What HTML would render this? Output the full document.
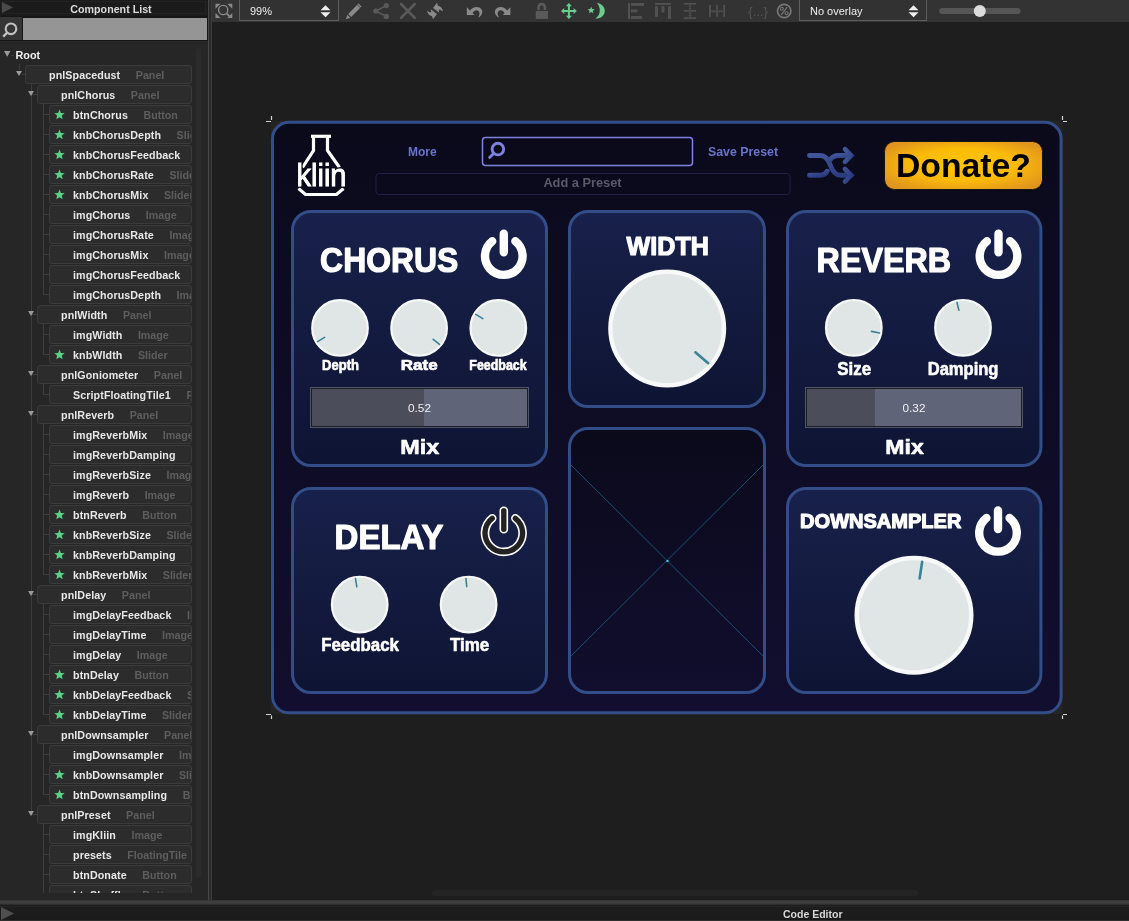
<!DOCTYPE html>
<html><head><meta charset="utf-8">
<style>
*{margin:0;padding:0;box-sizing:border-box}
html,body{width:1129px;height:921px;overflow:hidden;background:#1e1e1e;font-family:"Liberation Sans",sans-serif}
body>*{will-change:transform}
.a{position:absolute}
#side{position:absolute;left:0;top:0;width:208px;height:900px;background:#262626;overflow:hidden}
#sidehdr{position:absolute;left:0;top:0;width:208px;height:16px;background:#1b1b1b}
#sidehdr .in{position:absolute;left:1px;top:1px;width:205px;height:13px;border:1px solid #232323}
#sidehdr .t{position:absolute;left:0;top:2px;width:222px;text-align:center;color:#dcdcdc;font-size:10.7px;font-weight:bold;line-height:14px}
#search{position:absolute;left:0;top:16px;width:208px;height:25px;background:#161616}
#searchicon{position:absolute;left:0;top:1px;width:22px;height:23px;background:#353535}
#searchfield{position:absolute;left:23px;top:2px;width:184px;height:22px;background:#959595}
.row{position:absolute;height:19px;background:#2c2c2c;border:1px solid #3b3b3b;border-radius:3px;font-size:10.7px;line-height:19px;white-space:nowrap;overflow:hidden;padding-left:23px}
.row .nm{color:#e8e8e8;font-weight:bold;letter-spacing:0.1px}
.row .ty{color:#5e5e5e;font-weight:bold;margin-left:15.5px}
.star{position:absolute;left:4px;top:3px}
.tri{position:absolute;width:0;height:0;border-left:3.3px solid transparent;border-right:3.3px solid transparent;border-top:5.7px solid #9a9a9a}
.vl{position:absolute;width:1px;background:#3d3d3d}
.hl{position:absolute;height:1px;background:#3d3d3d}
#divider{position:absolute;left:208px;top:0;width:4px;height:900px;background:#2c2c2c;border-left:1px solid #474747;border-right:1px solid #3c3c3c}
#toolbar{position:absolute;left:212px;top:0;width:917px;height:22px;background:#333}
.combo{position:absolute;top:-1px;height:22px;border:1px solid #5e5e5e;background:#323232;color:#eee;font-size:11.5px;line-height:19px}
#bottom{position:absolute;left:0;top:900px;width:1129px;height:21px;background:linear-gradient(#1f1f1f,#1a1a1a)}
#bottom .band{position:absolute;left:0;top:0;width:1129px;height:5px;background:linear-gradient(#333,#404040 40%,#3a3a3a 70%,#262626)}
#bottom .l1{position:absolute;left:0;top:6px;width:1129px;height:1px;background:#252525}
#bottom .l2{position:absolute;left:0;top:20px;width:1129px;height:1px;background:#2e2e2e}
#bottom .t{position:absolute;left:783px;top:8px;color:#d8d8d8;font-size:10.5px;font-weight:bold}
/* plugin */
#plug{position:absolute;left:271px;top:121px;width:792px;height:594px;background:#232323}
#plugbody{position:absolute;left:0;top:0;width:792px;height:594px;border:3px solid #34569a;border-radius:18px;background:linear-gradient(#0b0a1c,#120e30)}
.pnl{position:absolute;border:3px solid #34569a;border-radius:18px;background:linear-gradient(#18214b,#0e1433)}
.ttl{position:absolute;color:#fff;font-weight:bold;white-space:nowrap;transform-origin:0 0}
.lbl{position:absolute;color:#fff;font-weight:bold;white-space:nowrap;text-align:center}
.knob{position:absolute;border-radius:50%;background:#dfe5e5;box-shadow:inset 0 0 0 2px #f3f3f3}
.sl{position:absolute;border:1px solid #27283a;background:#5d6178}
.sl .f{position:absolute;left:0;top:0;bottom:0;background:#4a4b55}
.sl .v{position:absolute;left:0;right:0;top:0;bottom:0;text-align:center;color:#e8e8e8;font-size:12px;line-height:38px}
</style></head><body>

<div id="side">
  <div id="sidehdr"><div class="in"></div>
    <svg class="a" style="left:2px;top:2px" width="12" height="12" viewBox="0 0 12 12"><path d="M0 0L11 5.5L0 11z" fill="#4a4a4a"/></svg>
    <div class="t">Component List</div></div>
  <div id="search"><div id="searchicon">
    <svg class="a" style="left:0;top:0" width="22" height="23" viewBox="0 0 22 23"><circle cx="11" cy="11.8" r="5.3" fill="none" stroke="#c2c2c2" stroke-width="2.1"/><path d="M7.2 15.6L3.2 19.6" stroke="#c2c2c2" stroke-width="2.3"/></svg>
  </div><div id="searchfield"></div></div>
  <div class="a" style="left:196px;top:48px;width:5px;height:830px;background:#2b2b2b;border-radius:3px"></div>
  <svg class="a" style="left:3.8px;top:50.8px" width="8" height="7" viewBox="0 0 8 7"><path d="M0 0H6.4L3.2 5.8z" fill="#9a9a9a"/></svg>
  <div class="a" style="left:11px;top:54.5px;width:3px;height:1px;background:#3a3a3a"></div>
  <div class="a" style="left:15.5px;top:48px;color:#f0f0f0;font-size:10.8px;font-weight:bold;line-height:14px">Root</div>
  <div class="a" style="left:19px;top:64px;width:1px;height:6px;background:#3a3a3a"></div>
<div id="treeabs" style="position:absolute;left:0;top:0;width:208px;height:893px;overflow:hidden">
<div class="vl" style="left:31.0px;top:83px;height:731px"></div>
<div class="hl" style="left:32.0px;top:93.5px;width:3px"></div>
<div class="hl" style="left:32.0px;top:313.5px;width:3px"></div>
<div class="hl" style="left:32.0px;top:373.5px;width:3px"></div>
<div class="hl" style="left:32.0px;top:413.5px;width:3px"></div>
<div class="hl" style="left:32.0px;top:593.5px;width:3px"></div>
<div class="hl" style="left:32.0px;top:733.5px;width:3px"></div>
<div class="hl" style="left:32.0px;top:813.5px;width:3px"></div>
<div class="vl" style="left:43.0px;top:103px;height:191px"></div>
<div class="hl" style="left:43.0px;top:113.5px;width:6px"></div>
<div class="hl" style="left:43.0px;top:133.5px;width:6px"></div>
<div class="hl" style="left:43.0px;top:153.5px;width:6px"></div>
<div class="hl" style="left:43.0px;top:173.5px;width:6px"></div>
<div class="hl" style="left:43.0px;top:193.5px;width:6px"></div>
<div class="hl" style="left:43.0px;top:213.5px;width:6px"></div>
<div class="hl" style="left:43.0px;top:233.5px;width:6px"></div>
<div class="hl" style="left:43.0px;top:253.5px;width:6px"></div>
<div class="hl" style="left:43.0px;top:273.5px;width:6px"></div>
<div class="hl" style="left:43.0px;top:293.5px;width:6px"></div>
<div class="vl" style="left:43.0px;top:323px;height:31px"></div>
<div class="hl" style="left:43.0px;top:333.5px;width:6px"></div>
<div class="hl" style="left:43.0px;top:353.5px;width:6px"></div>
<div class="vl" style="left:43.0px;top:383px;height:11px"></div>
<div class="hl" style="left:43.0px;top:393.5px;width:6px"></div>
<div class="vl" style="left:43.0px;top:423px;height:151px"></div>
<div class="hl" style="left:43.0px;top:433.5px;width:6px"></div>
<div class="hl" style="left:43.0px;top:453.5px;width:6px"></div>
<div class="hl" style="left:43.0px;top:473.5px;width:6px"></div>
<div class="hl" style="left:43.0px;top:493.5px;width:6px"></div>
<div class="hl" style="left:43.0px;top:513.5px;width:6px"></div>
<div class="hl" style="left:43.0px;top:533.5px;width:6px"></div>
<div class="hl" style="left:43.0px;top:553.5px;width:6px"></div>
<div class="hl" style="left:43.0px;top:573.5px;width:6px"></div>
<div class="vl" style="left:43.0px;top:603px;height:111px"></div>
<div class="hl" style="left:43.0px;top:613.5px;width:6px"></div>
<div class="hl" style="left:43.0px;top:633.5px;width:6px"></div>
<div class="hl" style="left:43.0px;top:653.5px;width:6px"></div>
<div class="hl" style="left:43.0px;top:673.5px;width:6px"></div>
<div class="hl" style="left:43.0px;top:693.5px;width:6px"></div>
<div class="hl" style="left:43.0px;top:713.5px;width:6px"></div>
<div class="vl" style="left:43.0px;top:743px;height:51px"></div>
<div class="hl" style="left:43.0px;top:753.5px;width:6px"></div>
<div class="hl" style="left:43.0px;top:773.5px;width:6px"></div>
<div class="hl" style="left:43.0px;top:793.5px;width:6px"></div>
<div class="vl" style="left:43.0px;top:823px;height:71px"></div>
<div class="hl" style="left:43.0px;top:833.5px;width:6px"></div>
<div class="hl" style="left:43.0px;top:853.5px;width:6px"></div>
<div class="hl" style="left:43.0px;top:873.5px;width:6px"></div>
<div class="hl" style="left:43.0px;top:893.5px;width:6px"></div>
<div class="row" style="left:25px;top:64.5px;width:166.5px"><span class="nm">pnlSpacedust</span><span class="ty">Panel</span></div><div class="tri" style="left:16px;top:71px"></div><div class="hl" style="left:22px;top:73.5px;width:4px"></div>
<div class="row" style="left:37px;top:84.5px;width:154.5px"><span class="nm">pnlChorus</span><span class="ty">Panel</span></div><div class="tri" style="left:28px;top:91px"></div><div class="hl" style="left:34px;top:93.5px;width:4px"></div>
<div class="row" style="left:49px;top:104.5px;width:142.5px"><span class="nm">btnChorus</span><span class="ty">Button</span><svg class="star" width="11" height="11" viewBox="0 0 20 20"><path d="M10 0.8l2.6 6.3 6.8.5-5.2 4.4 1.6 6.6L10 15l-5.8 3.6 1.6-6.6L.6 7.6l6.8-.5z" fill="#5ecf85"/></svg></div>
<div class="row" style="left:49px;top:124.5px;width:142.5px"><span class="nm">knbChorusDepth</span><span class="ty">Slider</span><svg class="star" width="11" height="11" viewBox="0 0 20 20"><path d="M10 0.8l2.6 6.3 6.8.5-5.2 4.4 1.6 6.6L10 15l-5.8 3.6 1.6-6.6L.6 7.6l6.8-.5z" fill="#5ecf85"/></svg></div>
<div class="row" style="left:49px;top:144.5px;width:142.5px"><span class="nm">knbChorusFeedback</span><span class="ty">Slider</span><svg class="star" width="11" height="11" viewBox="0 0 20 20"><path d="M10 0.8l2.6 6.3 6.8.5-5.2 4.4 1.6 6.6L10 15l-5.8 3.6 1.6-6.6L.6 7.6l6.8-.5z" fill="#5ecf85"/></svg></div>
<div class="row" style="left:49px;top:164.5px;width:142.5px"><span class="nm">knbChorusRate</span><span class="ty">Slider</span><svg class="star" width="11" height="11" viewBox="0 0 20 20"><path d="M10 0.8l2.6 6.3 6.8.5-5.2 4.4 1.6 6.6L10 15l-5.8 3.6 1.6-6.6L.6 7.6l6.8-.5z" fill="#5ecf85"/></svg></div>
<div class="row" style="left:49px;top:184.5px;width:142.5px"><span class="nm">knbChorusMix</span><span class="ty">Slider</span><svg class="star" width="11" height="11" viewBox="0 0 20 20"><path d="M10 0.8l2.6 6.3 6.8.5-5.2 4.4 1.6 6.6L10 15l-5.8 3.6 1.6-6.6L.6 7.6l6.8-.5z" fill="#5ecf85"/></svg></div>
<div class="row" style="left:49px;top:204.5px;width:142.5px"><span class="nm">imgChorus</span><span class="ty">Image</span></div>
<div class="row" style="left:49px;top:224.5px;width:142.5px"><span class="nm">imgChorusRate</span><span class="ty">Image</span></div>
<div class="row" style="left:49px;top:244.5px;width:142.5px"><span class="nm">imgChorusMix</span><span class="ty">Image</span></div>
<div class="row" style="left:49px;top:264.5px;width:142.5px"><span class="nm">imgChorusFeedback</span><span class="ty">Image</span></div>
<div class="row" style="left:49px;top:284.5px;width:142.5px"><span class="nm">imgChorusDepth</span><span class="ty">Image</span></div>
<div class="row" style="left:37px;top:304.5px;width:154.5px"><span class="nm">pnlWidth</span><span class="ty">Panel</span></div><div class="tri" style="left:28px;top:311px"></div><div class="hl" style="left:34px;top:313.5px;width:4px"></div>
<div class="row" style="left:49px;top:324.5px;width:142.5px"><span class="nm">imgWidth</span><span class="ty">Image</span></div>
<div class="row" style="left:49px;top:344.5px;width:142.5px"><span class="nm">knbWIdth</span><span class="ty">Slider</span><svg class="star" width="11" height="11" viewBox="0 0 20 20"><path d="M10 0.8l2.6 6.3 6.8.5-5.2 4.4 1.6 6.6L10 15l-5.8 3.6 1.6-6.6L.6 7.6l6.8-.5z" fill="#5ecf85"/></svg></div>
<div class="row" style="left:37px;top:364.5px;width:154.5px"><span class="nm">pnlGoniometer</span><span class="ty">Panel</span></div><div class="tri" style="left:28px;top:371px"></div><div class="hl" style="left:34px;top:373.5px;width:4px"></div>
<div class="row" style="left:49px;top:384.5px;width:142.5px"><span class="nm">ScriptFloatingTile1</span><span class="ty">FloatingTile</span></div>
<div class="row" style="left:37px;top:404.5px;width:154.5px"><span class="nm">pnlReverb</span><span class="ty">Panel</span></div><div class="tri" style="left:28px;top:411px"></div><div class="hl" style="left:34px;top:413.5px;width:4px"></div>
<div class="row" style="left:49px;top:424.5px;width:142.5px"><span class="nm">imgReverbMix</span><span class="ty">Image</span></div>
<div class="row" style="left:49px;top:444.5px;width:142.5px"><span class="nm">imgReverbDamping</span><span class="ty">Image</span></div>
<div class="row" style="left:49px;top:464.5px;width:142.5px"><span class="nm">imgReverbSize</span><span class="ty">Image</span></div>
<div class="row" style="left:49px;top:484.5px;width:142.5px"><span class="nm">imgReverb</span><span class="ty">Image</span></div>
<div class="row" style="left:49px;top:504.5px;width:142.5px"><span class="nm">btnReverb</span><span class="ty">Button</span><svg class="star" width="11" height="11" viewBox="0 0 20 20"><path d="M10 0.8l2.6 6.3 6.8.5-5.2 4.4 1.6 6.6L10 15l-5.8 3.6 1.6-6.6L.6 7.6l6.8-.5z" fill="#5ecf85"/></svg></div>
<div class="row" style="left:49px;top:524.5px;width:142.5px"><span class="nm">knbReverbSize</span><span class="ty">Slider</span><svg class="star" width="11" height="11" viewBox="0 0 20 20"><path d="M10 0.8l2.6 6.3 6.8.5-5.2 4.4 1.6 6.6L10 15l-5.8 3.6 1.6-6.6L.6 7.6l6.8-.5z" fill="#5ecf85"/></svg></div>
<div class="row" style="left:49px;top:544.5px;width:142.5px"><span class="nm">knbReverbDamping</span><span class="ty">Slider</span><svg class="star" width="11" height="11" viewBox="0 0 20 20"><path d="M10 0.8l2.6 6.3 6.8.5-5.2 4.4 1.6 6.6L10 15l-5.8 3.6 1.6-6.6L.6 7.6l6.8-.5z" fill="#5ecf85"/></svg></div>
<div class="row" style="left:49px;top:564.5px;width:142.5px"><span class="nm">knbReverbMix</span><span class="ty">Slider</span><svg class="star" width="11" height="11" viewBox="0 0 20 20"><path d="M10 0.8l2.6 6.3 6.8.5-5.2 4.4 1.6 6.6L10 15l-5.8 3.6 1.6-6.6L.6 7.6l6.8-.5z" fill="#5ecf85"/></svg></div>
<div class="row" style="left:37px;top:584.5px;width:154.5px"><span class="nm">pnlDelay</span><span class="ty">Panel</span></div><div class="tri" style="left:28px;top:591px"></div><div class="hl" style="left:34px;top:593.5px;width:4px"></div>
<div class="row" style="left:49px;top:604.5px;width:142.5px"><span class="nm">imgDelayFeedback</span><span class="ty">Image</span></div>
<div class="row" style="left:49px;top:624.5px;width:142.5px"><span class="nm">imgDelayTime</span><span class="ty">Image</span></div>
<div class="row" style="left:49px;top:644.5px;width:142.5px"><span class="nm">imgDelay</span><span class="ty">Image</span></div>
<div class="row" style="left:49px;top:664.5px;width:142.5px"><span class="nm">btnDelay</span><span class="ty">Button</span><svg class="star" width="11" height="11" viewBox="0 0 20 20"><path d="M10 0.8l2.6 6.3 6.8.5-5.2 4.4 1.6 6.6L10 15l-5.8 3.6 1.6-6.6L.6 7.6l6.8-.5z" fill="#5ecf85"/></svg></div>
<div class="row" style="left:49px;top:684.5px;width:142.5px"><span class="nm">knbDelayFeedback</span><span class="ty">Slider</span><svg class="star" width="11" height="11" viewBox="0 0 20 20"><path d="M10 0.8l2.6 6.3 6.8.5-5.2 4.4 1.6 6.6L10 15l-5.8 3.6 1.6-6.6L.6 7.6l6.8-.5z" fill="#5ecf85"/></svg></div>
<div class="row" style="left:49px;top:704.5px;width:142.5px"><span class="nm">knbDelayTime</span><span class="ty">Slider</span><svg class="star" width="11" height="11" viewBox="0 0 20 20"><path d="M10 0.8l2.6 6.3 6.8.5-5.2 4.4 1.6 6.6L10 15l-5.8 3.6 1.6-6.6L.6 7.6l6.8-.5z" fill="#5ecf85"/></svg></div>
<div class="row" style="left:37px;top:724.5px;width:154.5px"><span class="nm">pnlDownsampler</span><span class="ty">Panel</span></div><div class="tri" style="left:28px;top:731px"></div><div class="hl" style="left:34px;top:733.5px;width:4px"></div>
<div class="row" style="left:49px;top:744.5px;width:142.5px"><span class="nm">imgDownsampler</span><span class="ty">Image</span></div>
<div class="row" style="left:49px;top:764.5px;width:142.5px"><span class="nm">knbDownsampler</span><span class="ty">Slider</span><svg class="star" width="11" height="11" viewBox="0 0 20 20"><path d="M10 0.8l2.6 6.3 6.8.5-5.2 4.4 1.6 6.6L10 15l-5.8 3.6 1.6-6.6L.6 7.6l6.8-.5z" fill="#5ecf85"/></svg></div>
<div class="row" style="left:49px;top:784.5px;width:142.5px"><span class="nm">btnDownsampling</span><span class="ty">Button</span><svg class="star" width="11" height="11" viewBox="0 0 20 20"><path d="M10 0.8l2.6 6.3 6.8.5-5.2 4.4 1.6 6.6L10 15l-5.8 3.6 1.6-6.6L.6 7.6l6.8-.5z" fill="#5ecf85"/></svg></div>
<div class="row" style="left:37px;top:804.5px;width:154.5px"><span class="nm">pnlPreset</span><span class="ty">Panel</span></div><div class="tri" style="left:28px;top:811px"></div><div class="hl" style="left:34px;top:813.5px;width:4px"></div>
<div class="row" style="left:49px;top:824.5px;width:142.5px"><span class="nm">imgKliin</span><span class="ty">Image</span></div>
<div class="row" style="left:49px;top:844.5px;width:142.5px"><span class="nm">presets</span><span class="ty">FloatingTile</span></div>
<div class="row" style="left:49px;top:864.5px;width:142.5px"><span class="nm">btnDonate</span><span class="ty">Button</span></div>
<div class="row" style="left:49px;top:884.5px;width:142.5px"><span class="nm">btnShuffle</span><span class="ty">Button</span></div>
</div>
</div>
<div id="divider"></div>
<div id="toolbar">
<svg class="a" style="left:-212px;top:0" width="1129" height="22" viewBox="0 0 1129 22">
 <!-- zoom fit -->
 <g fill="#8a8a8a">
  <path d="M215.5 3.7h5l-5 5z M232.3 3.7h-5l5 5z M215.5 18h5l-5-5z M232.3 18h-5l5-5z"/>
 </g>
 <circle cx="223.2" cy="10" r="4.6" fill="none" stroke="#8a8a8a" stroke-width="1.4"/>
 <path d="M226.6 13.4l2.8 2.8" stroke="#8a8a8a" stroke-width="1.8"/>
 <!-- pencil -->
 <path d="M345.8 19.3l1.6-4.6 3 3z" fill="#8a8a8a"/>
 <path d="M348.2 13.9l10.3-10.3 3 3-10.3 10.3z" fill="#8a8a8a"/>
 <path d="M357.4 4.8l3 3" stroke="#333" stroke-width="0.8"/>
 <!-- share -->
 <g fill="#5a5a5a">
  <circle cx="375.8" cy="11" r="2.6"/><circle cx="386.3" cy="5.6" r="2.6"/><circle cx="386.3" cy="16.4" r="2.6"/>
 </g>
 <path d="M375.8 11L386.3 5.6M375.8 11L386.3 16.4" stroke="#5a5a5a" stroke-width="1.5"/>
 <!-- x -->
 <path d="M401 4L414.8 17.8M414.8 4L401 17.8" stroke="#5a5a5a" stroke-width="2.5" stroke-linecap="round"/>
 <!-- sync -->
 <g fill="#8a8a8a">
  <path transform="translate(0.7,-0.5)" d="M432.3 8.6L436.3 3.2L437.3 6.3C440.2 6.8 442 9.2 442.2 12C440.8 10.6 439.4 10.1 438 10.2L438.6 13.3z"/>
  <path transform="translate(-0.7,0.5)" d="M437.7 13.4L433.7 18.8L432.7 15.7C429.8 15.2 428 12.8 427.8 10C429.2 11.4 430.6 11.9 432 11.8L431.4 8.7z"/>
 </g>
 <!-- undo -->
 <g id="undo" fill="#8a8a8a">
  <path d="M466.8 7.3V15H474.5z"/>
  <path d="M469.6 11.2C472.6 6.6 478.6 5.8 481.4 9.2C483.4 11.9 482 15.6 478 17.8C479.8 15.2 480 12.6 478.8 11.2C477 9.4 474.2 9.9 472.4 13.2z"/>
 </g>
 <!-- redo -->
 <g transform="translate(977.2,0) scale(-1,1)" fill="#8a8a8a">
  <path d="M466.8 7.3V15H474.5z"/>
  <path d="M469.6 11.2C472.6 6.6 478.6 5.8 481.4 9.2C483.4 11.9 482 15.6 478 17.8C479.8 15.2 480 12.6 478.8 11.2C477 9.4 474.2 9.9 472.4 13.2z"/>
 </g>
 <!-- lock -->
 <path d="M538.5 10V7.3a3.2 3.2 0 0 1 6.4 0V10" fill="none" stroke="#5a5a5a" stroke-width="2.6"/>
 <rect x="535.8" y="10.9" width="12.2" height="8" fill="#5a5a5a"/>
 <!-- move -->
 <g fill="#6ccb8e">
  <path d="M568.9 3.1l-3 3.2h2v9.4h-2l3 3.2 3-3.2h-2v-9.4h2z"/>
  <path d="M561 11.1l3.2-3v2h9.4v-2l3.2 3-3.2 3v-2h-9.4v2z"/>
 </g>
 <!-- moon -->
 <path d="M596.8 2.8C601.6 3.6 604.8 7 604.8 11C604.8 15.3 601 18.7 595.3 18.7C598.4 16.5 599.8 13.7 599.8 10.6C599.8 7.6 598.7 4.9 596.8 2.8z" fill="#6ccb8e"/>
 <path d="M591.2 6.8l1 2.3 2.5 0.2-1.9 1.6 0.6 2.4-2.2-1.3-2.2 1.3 0.6-2.4-1.9-1.6 2.5-0.2z" fill="#6ccb8e"/>
 <!-- align left -->
 <g fill="#515151">
  <rect x="628" y="3" width="2" height="15.9"/>
  <rect x="631" y="3" width="13" height="2.9"/>
  <rect x="631" y="9.4" width="6.5" height="3"/>
  <rect x="631" y="16" width="11" height="2.9"/>
 </g>
 <!-- align top -->
 <g fill="#515151">
  <rect x="655" y="3" width="16" height="1.8"/>
  <rect x="655" y="6.2" width="3" height="10.6"/>
  <rect x="661.5" y="6.2" width="3" height="6.3"/>
  <rect x="668" y="6.2" width="3" height="12.7"/>
 </g>
 <!-- distribute vertical -->
 <g fill="#515151">
  <rect x="683.8" y="3" width="12.2" height="1.6"/>
  <rect x="683.8" y="10.1" width="12.2" height="1.6"/>
  <rect x="683.8" y="17.2" width="12.2" height="1.7"/>
  <rect x="689.5" y="5" width="1" height="4.6"/><rect x="689.5" y="12.2" width="1" height="4.6"/>
  <path d="M688.3 6.5h3.4l-1.7-1.5z M688.3 8.2h3.4l-1.7 1.5z M688.3 13.6h3.4l-1.7-1.5z M688.3 15.3h3.4l-1.7 1.5z"/>
 </g>
 <!-- distribute horizontal -->
 <g fill="#515151">
  <rect x="709" y="4.8" width="1.9" height="12"/>
  <rect x="716.2" y="4.8" width="1.6" height="12"/>
  <rect x="723.3" y="4.8" width="1.7" height="12"/>
  <rect x="711.2" y="10.7" width="4.6" height="1"/><rect x="718.2" y="10.7" width="4.6" height="1"/>
  <path d="M712.6 9.5v3.4l-1.5-1.7z M714.3 9.5v3.4l1.5-1.7z M719.6 9.5v3.4l-1.5-1.7z M721.3 9.5v3.4l1.5-1.7z"/>
 </g>
 <!-- {...} -->
 <text x="748.3" y="15.6" font-family="Liberation Sans" font-size="13" fill="#555">{...}</text>
 <!-- % -->
 <circle cx="784.2" cy="11" r="6.7" fill="none" stroke="#777" stroke-width="1.7"/>
 <circle cx="781.8" cy="8.7" r="1.5" fill="none" stroke="#777" stroke-width="1.1"/><circle cx="786.6" cy="13.3" r="1.5" fill="none" stroke="#777" stroke-width="1.1"/><path d="M787.2 7.2L781.2 14.8" stroke="#777" stroke-width="1.2"/>
 <!-- slider -->
 <rect x="939.2" y="8.1" width="81.4" height="6" rx="3" fill="#555"/>
 <circle cx="979.8" cy="11.1" r="6" fill="#dcdcdc"/>
</svg>
<div class="combo" style="left:27px;width:100px"><span style="position:absolute;left:10px;top:2px;font-size:11px">99%</span>
 <svg class="a" style="left:80px;top:5px" width="12" height="13" viewBox="0 0 12 13"><path d="M0.5 5.2L5.5 0.3L10.5 5.2z M0.5 7.3L5.5 12.2L10.5 7.3z" fill="#eee"/></svg></div>
<div class="combo" style="left:587px;width:128px"><span style="position:absolute;left:10px;top:2px;font-size:11px">No overlay</span>
 <svg class="a" style="left:108px;top:5px" width="12" height="13" viewBox="0 0 12 13"><path d="M0.5 5.2L5.5 0.3L10.5 5.2z M0.5 7.3L5.5 12.2L10.5 7.3z" fill="#eee"/></svg></div>

</div>
<div id="bottom"><div class="band"></div><div class="l1"></div><div class="l2"></div>
  <svg class="a" style="left:1px;top:7px" width="14" height="13" viewBox="0 0 14 13"><path d="M0 0L13 6.5L0 13z" fill="#4e4e4e"/></svg>
  <div class="t">Code Editor</div></div>
<!-- canvas h-scrollbar -->
<div class="a" style="left:432px;top:890px;width:486px;height:6px;background:#242424;border-radius:3px"></div>

<svg class="a" style="left:0;top:0" width="1129" height="921" viewBox="0 0 1129 921">
<defs>
<linearGradient id="gBody" x1="0" y1="0" x2="0" y2="1"><stop offset="0" stop-color="#0b0a1b"/><stop offset="1" stop-color="#120e2f"/></linearGradient>
<linearGradient id="gPnl" x1="0" y1="0" x2="0" y2="1"><stop offset="0" stop-color="#18214b"/><stop offset="1" stop-color="#0e1433"/></linearGradient>
<linearGradient id="gGon" x1="0" y1="0" x2="0" y2="1"><stop offset="0" stop-color="#0b0a1b"/><stop offset="1" stop-color="#110e2e"/></linearGradient>
<radialGradient id="gDon" cx="0.5" cy="0.5" r="0.6" fx="0.5" fy="0.45"><stop offset="0" stop-color="#ffc503"/><stop offset="0.55" stop-color="#fbbb08"/><stop offset="1" stop-color="#e0951e"/></radialGradient>
<linearGradient id="gShuf" x1="0" y1="0" x2="1" y2="1"><stop offset="0" stop-color="#43579d"/><stop offset="1" stop-color="#283a7c"/></linearGradient>
</defs>
<rect x="271" y="120.8" width="791.6" height="593.5" fill="#242424"/>
<rect x="272.5" y="122.3" width="788.6" height="590.5" rx="16.5" fill="url(#gBody)" stroke="#324d87" stroke-width="3"/>
<path d="M266 121.5H271M271.5 116V120M1062.5 116V120M1063 121.5H1067M266 714.5H271M271.5 715.5V719M1063 714.5H1067M1062.5 715.5V719" stroke="#d4d4d4" stroke-width="1.2"/>
<g fill="none" stroke="#fff" stroke-width="3.2" stroke-linejoin="miter">
<path d="M311 136.3H331"/>
<path d="M313.5 137V150.5L302.5 167.5M327.5 137V150.5L339.5 167.5"/>
<path d="M298.5 188.5L305.5 194.5H336.5L343.5 188.5"/>
</g>
<text x="296.5" y="185.5" font-family="Liberation Sans" font-size="30.5" fill="#fff" stroke="#0b0a1b" stroke-width="3.5" paint-order="stroke" textLength="50" lengthAdjust="spacingAndGlyphs">kliin</text>
<text x="296.5" y="185.5" font-family="Liberation Sans" font-size="30.5" fill="#fff" stroke="#fff" stroke-width="0.8" textLength="50" lengthAdjust="spacingAndGlyphs">kliin</text>
<text x="408" y="155.8" font-family="Liberation Sans" font-weight="bold" font-size="13.5" fill="#6a74c8" textLength="28.7" lengthAdjust="spacingAndGlyphs">More</text>
<text x="708" y="155.8" font-family="Liberation Sans" font-weight="bold" font-size="13.5" fill="#6a74c8" textLength="70" lengthAdjust="spacingAndGlyphs">Save Preset</text>
<rect x="482.5" y="137.5" width="210" height="28" rx="3" fill="#0b0a1b" stroke="#7d82e0" stroke-width="1.5"/>
<circle cx="497.9" cy="149.1" r="5.8" fill="none" stroke="#7d82e0" stroke-width="2.9"/><path d="M493.6 153.6L489.6 157.6" stroke="#7d82e0" stroke-width="2.8" stroke-linecap="round"/>
<rect x="376" y="173.5" width="414" height="21" rx="3" fill="#0b0a1c" stroke="#1e1e46" stroke-width="1"/>
<text x="582.5" y="187" text-anchor="middle" font-family="Liberation Sans" font-weight="bold" font-size="12.8" fill="#5a5a6a">Add a Preset</text>
<g fill="none" stroke="url(#gShuf)" stroke-width="4.9" stroke-linecap="round">
<path d="M809.5 155.5H820.5C826 155.5 828.5 160 830.5 165.5C832.5 171 835 175.3 840.5 175.3H849"/>
<path d="M809.5 175.3H820.5C824 175.3 826 173.5 827.2 171.2"/>
<path d="M829.8 160.2C831.8 157.3 834.2 155.5 838.5 155.5H849"/>
</g>
<g fill="none" stroke="url(#gShuf)" stroke-width="4.6" stroke-linecap="round" stroke-linejoin="miter">
<path d="M845 149.2L851.3 155.5L845 161.8M845 169L851.3 175.3L845 181.6"/>
</g>
<rect x="884.5" y="141.5" width="158" height="48" rx="10" fill="url(#gDon)" stroke="#151515" stroke-width="1"/>
<text x="896" y="177" font-family="Liberation Sans" font-weight="bold" font-size="33.8" fill="#000" textLength="135" lengthAdjust="spacingAndGlyphs">Donate?</text>
<rect x="292.5" y="211.5" width="254" height="254" rx="18.5" fill="url(#gPnl)" stroke="#324d87" stroke-width="3"/>
<rect x="569.5" y="211.5" width="195" height="195" rx="18.5" fill="url(#gPnl)" stroke="#324d87" stroke-width="3"/>
<rect x="787.5" y="211.5" width="253.4000000000001" height="254" rx="18.5" fill="url(#gPnl)" stroke="#324d87" stroke-width="3"/>
<rect x="292.5" y="488.5" width="254" height="204" rx="18.5" fill="url(#gPnl)" stroke="#324d87" stroke-width="3"/>
<rect x="569.5" y="428.5" width="195" height="264" rx="18.5" fill="url(#gGon)" stroke="#324d87" stroke-width="3"/>
<rect x="787.5" y="488.5" width="253.4000000000001" height="204" rx="18.5" fill="url(#gPnl)" stroke="#324d87" stroke-width="3"/>
<text x="320.1" y="272.0" font-family="Liberation Sans" font-weight="bold" font-size="35.90" fill="#fff" stroke="#fff" stroke-width="1.2" stroke-linejoin="round" textLength="138.29999999999995" lengthAdjust="spacingAndGlyphs">CHORUS</text>
<text x="626.6" y="254.6" font-family="Liberation Sans" font-weight="bold" font-size="25.44" fill="#fff" stroke="#fff" stroke-width="1.2" stroke-linejoin="round" textLength="82.29999999999995" lengthAdjust="spacingAndGlyphs">WIDTH</text>
<text x="816.6" y="272.0" font-family="Liberation Sans" font-weight="bold" font-size="34.59" fill="#fff" stroke="#fff" stroke-width="1.2" stroke-linejoin="round" textLength="134.5999999999999" lengthAdjust="spacingAndGlyphs">REVERB</text>
<text x="334.6" y="548.8" font-family="Liberation Sans" font-weight="bold" font-size="34.88" fill="#fff" stroke="#fff" stroke-width="1.2" stroke-linejoin="round" textLength="108.79999999999995" lengthAdjust="spacingAndGlyphs">DELAY</text>
<text x="800.1" y="527.6" font-family="Liberation Sans" font-weight="bold" font-size="20.93" fill="#fff" stroke="#fff" stroke-width="1.2" stroke-linejoin="round" textLength="161.29999999999995" lengthAdjust="spacingAndGlyphs">DOWNSAMPLER</text>
<circle cx="340" cy="327.9" r="27.82" fill="#dfe6e5" stroke="#f7f8f8" stroke-width="2.17"/>
<path d="M324.60 337.34L317.58 341.65" stroke="#3a8297" stroke-width="1.6" stroke-linecap="round"/>
<circle cx="419.1" cy="327.9" r="27.82" fill="#dfe6e5" stroke="#f7f8f8" stroke-width="2.17"/>
<path d="M433.14 339.27L439.54 344.45" stroke="#3a8297" stroke-width="1.6" stroke-linecap="round"/>
<circle cx="498.3" cy="327.9" r="27.82" fill="#dfe6e5" stroke="#f7f8f8" stroke-width="2.17"/>
<path d="M482.81 318.62L475.74 314.38" stroke="#3a8297" stroke-width="1.6" stroke-linecap="round"/>
<circle cx="667.2" cy="328.5" r="56.79" fill="#dfe6e5" stroke="#f7f8f8" stroke-width="4.42"/>
<path d="M695.37 352.29L708.22 363.14" stroke="#3a8297" stroke-width="2.6" stroke-linecap="round"/>
<circle cx="853.8" cy="327.8" r="27.82" fill="#dfe6e5" stroke="#f7f8f8" stroke-width="2.17"/>
<path d="M871.50 331.39L879.57 333.03" stroke="#3a8297" stroke-width="1.6" stroke-linecap="round"/>
<circle cx="963" cy="327.8" r="27.82" fill="#dfe6e5" stroke="#f7f8f8" stroke-width="2.17"/>
<path d="M958.86 310.22L956.98 302.20" stroke="#3a8297" stroke-width="1.6" stroke-linecap="round"/>
<circle cx="359.7" cy="604.6" r="27.82" fill="#dfe6e5" stroke="#f7f8f8" stroke-width="2.17"/>
<path d="M356.81 586.77L355.49 578.64" stroke="#3a8297" stroke-width="1.6" stroke-linecap="round"/>
<circle cx="468.6" cy="604.6" r="27.82" fill="#dfe6e5" stroke="#f7f8f8" stroke-width="2.17"/>
<path d="M466.75 586.63L465.91 578.44" stroke="#3a8297" stroke-width="1.6" stroke-linecap="round"/>
<circle cx="914" cy="615.3" r="57.27" fill="#dfe6e5" stroke="#f7f8f8" stroke-width="4.46"/>
<path d="M919.61 578.54L922.17 561.78" stroke="#3a8297" stroke-width="2.6" stroke-linecap="round"/>
<text x="322.1" y="370.3" font-family="Liberation Sans" font-weight="bold" font-size="13.95" fill="#fff" stroke="#fff" stroke-width="0.6" stroke-linejoin="round" textLength="36.89999999999998" lengthAdjust="spacingAndGlyphs">Depth</text>
<text x="400.8" y="370.3" font-family="Liberation Sans" font-weight="bold" font-size="13.95" fill="#fff" stroke="#fff" stroke-width="0.6" stroke-linejoin="round" textLength="36.89999999999998" lengthAdjust="spacingAndGlyphs">Rate</text>
<text x="469.3" y="370.3" font-family="Liberation Sans" font-weight="bold" font-size="13.95" fill="#fff" stroke="#fff" stroke-width="0.6" stroke-linejoin="round" textLength="57.400000000000034" lengthAdjust="spacingAndGlyphs">Feedback</text>
<text x="400.3" y="453.7" font-family="Liberation Sans" font-weight="bold" font-size="20.06" fill="#fff" stroke="#fff" stroke-width="0.6" stroke-linejoin="round" textLength="39.0" lengthAdjust="spacingAndGlyphs">Mix</text>
<text x="837.3" y="374.5" font-family="Liberation Sans" font-weight="bold" font-size="18.75" fill="#fff" stroke="#fff" stroke-width="0.6" stroke-linejoin="round" textLength="33.90000000000009" lengthAdjust="spacingAndGlyphs">Size</text>
<text x="927.6999999999999" y="374.5" font-family="Liberation Sans" font-weight="bold" font-size="18.75" fill="#fff" stroke="#fff" stroke-width="0.6" stroke-linejoin="round" textLength="70.80000000000007" lengthAdjust="spacingAndGlyphs">Damping</text>
<text x="885.3" y="453.7" font-family="Liberation Sans" font-weight="bold" font-size="20.06" fill="#fff" stroke="#fff" stroke-width="0.6" stroke-linejoin="round" textLength="38.40000000000009" lengthAdjust="spacingAndGlyphs">Mix</text>
<text x="321.2" y="651.4000000000001" font-family="Liberation Sans" font-weight="bold" font-size="19.19" fill="#fff" stroke="#fff" stroke-width="0.6" stroke-linejoin="round" textLength="77.80000000000001" lengthAdjust="spacingAndGlyphs">Feedback</text>
<text x="449.90000000000003" y="651.4000000000001" font-family="Liberation Sans" font-weight="bold" font-size="19.19" fill="#fff" stroke="#fff" stroke-width="0.6" stroke-linejoin="round" textLength="39.299999999999955" lengthAdjust="spacingAndGlyphs">Time</text>
<rect x="310" y="387" width="219" height="41" fill="#4f5366"/>
<rect x="311" y="388" width="217" height="39" fill="#1d1d24"/>
<rect x="312" y="389" width="215" height="37" fill="#5f6479"/>
<rect x="312" y="389" width="112" height="37" fill="#4b4e5a"/>
<text x="419.5" y="412.1" text-anchor="middle" font-family="Liberation Sans" font-size="11.8" fill="#f0f0f0">0.52</text>
<rect x="805" y="387" width="218" height="41" fill="#4f5366"/>
<rect x="806" y="388" width="216" height="39" fill="#1d1d24"/>
<rect x="807" y="389" width="214" height="37" fill="#5f6479"/>
<rect x="807" y="389" width="68" height="37" fill="#4b4e5a"/>
<text x="914.0" y="412.1" text-anchor="middle" font-family="Liberation Sans" font-size="11.8" fill="#f0f0f0">0.32</text>
<g fill="none" stroke="#fff" stroke-linecap="round" stroke-width="8.4"><path d="M492.23 241.29A18.8 18.8 0 1 0 515.37 241.29M503.8 233.70000000000002V252.3"/></g>
<g fill="none" stroke="#fff" stroke-linecap="round" stroke-width="8.4"><path d="M986.93 241.29A18.8 18.8 0 1 0 1010.07 241.29M998.5 233.70000000000002V252.3"/></g>
<g fill="none" stroke-linecap="round"><path d="M492.23 518.29A18.8 18.8 0 1 0 515.37 518.29M503.8 510.70000000000005V529.3000000000001" stroke="#fff" stroke-width="8.6"/><path d="M492.23 518.29A18.8 18.8 0 1 0 515.37 518.29M503.8 510.70000000000005V529.3000000000001" stroke="#222" stroke-width="5.4"/></g>
<g fill="none" stroke="#fff" stroke-linecap="round" stroke-width="8.4"><path d="M986.43 517.99A18.8 18.8 0 1 0 1009.57 517.99M998 510.4V529.0"/></g>
<path d="M568 462L766 659M766 462L568 659" stroke="#1c5a78" stroke-width="0.9"/>
<rect x="666.5" y="560" width="2" height="2" fill="#3fd0f5"/>
</svg>

</body></html>
